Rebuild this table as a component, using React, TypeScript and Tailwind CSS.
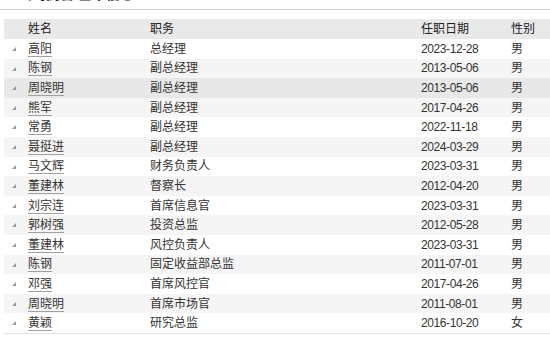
const ROWS = [
  { name: '高阳', title: '总经理', date: '2023-12-28', sex: '男' },
  { name: '陈钢', title: '副总经理', date: '2013-05-06', sex: '男' },
  { name: '周晓明', title: '副总经理', date: '2013-05-06', sex: '男' },
  { name: '熊军', title: '副总经理', date: '2017-04-26', sex: '男' },
  { name: '常勇', title: '副总经理', date: '2022-11-18', sex: '男' },
  { name: '聂挺进', title: '副总经理', date: '2024-03-29', sex: '男' },
  { name: '马文辉', title: '财务负责人', date: '2023-03-31', sex: '男' },
  { name: '董建林', title: '督察长', date: '2012-04-20', sex: '男' },
  { name: '刘宗连', title: '首席信息官', date: '2023-03-31', sex: '男' },
  { name: '郭树强', title: '投资总监', date: '2012-05-28', sex: '男' },
  { name: '董建林', title: '风控负责人', date: '2023-03-31', sex: '男' },
  { name: '陈钢', title: '固定收益部总监', date: '2011-07-01', sex: '男' },
  { name: '邓强', title: '首席风控官', date: '2017-04-26', sex: '男' },
  { name: '周晓明', title: '首席市场官', date: '2011-08-01', sex: '男' },
  { name: '黄颖', title: '研究总监', date: '2016-10-20', sex: '女' },
];

export default function App() {
  return (
    <div
      className="w-[550px] h-[341px] overflow-hidden bg-white text-[12px] text-[#333]"
      style={{ fontFamily: '"Liberation Sans", "Noto Sans CJK SC", sans-serif' }}
    >
      {/* Title (scrolled mostly out of view) */}
      <div className="-mt-[13px] h-[23px] border-b border-[#cfcfcf] pl-[18px] text-[14px] font-bold leading-[14px] text-[#222]">
        公司高管 基本信息
      </div>

      <div className="ml-[4px] mt-[9px]">
        {/* Header */}
        <div className="flex h-[20px] items-center bg-[#e9e9e9] text-[#222]">
          <div className="w-[24px]" />
          <div className="w-[122px]">姓名</div>
          <div className="w-[271px]">职务</div>
          <div className="w-[90px]">任职日期</div>
          <div className="flex-1">性别</div>
        </div>

        {/* Body */}
        <div className="border-b border-[#e2e2e2]">
          {ROWS.map((r, i) => {
            const bg = i === 2 ? 'bg-[#e8e8e8]' : i % 2 === 1 ? 'bg-[#f5f5f5]' : 'bg-white';
            return (
              <div key={i} className={`flex h-[19.6px] items-center ${bg}`}>
                <div className="w-[24px] self-start pl-[8px] pt-[8px]">
                  <div className="h-0 w-0 border-l-[4px] border-b-[4px] border-l-transparent border-b-[#9a9a9a]" />
                </div>
                <div className="w-[122px]">
                  <span className="inline-block border-b border-[#a0a0a0] leading-[14px]">{r.name}</span>
                </div>
                <div className="w-[271px]">{r.title}</div>
                <div className="w-[90px] tracking-[-0.4px]">{r.date}</div>
                <div className="flex-1">{r.sex}</div>
              </div>
            );
          })}
        </div>
      </div>
    </div>
  );
}
